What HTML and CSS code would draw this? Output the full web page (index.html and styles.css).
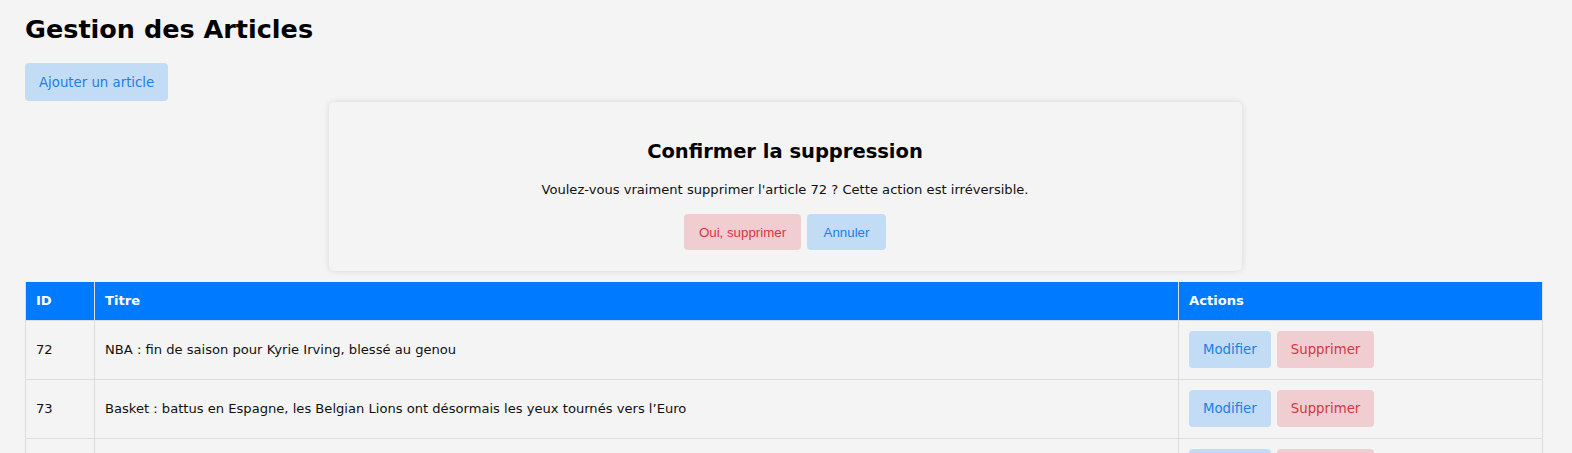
FILE: index.html
```html
<!DOCTYPE html>
<html lang="fr">
<head>
<meta charset="utf-8">
<title>Gestion des Articles</title>
<link rel="stylesheet" href="styles.css">
</head>
<body>
<div class="page">
  <h1 class="title">Gestion des Articles</h1>
  <button class="btn btn-blue add">Ajouter un article</button>
  <div class="modal">
    <h2 class="modal-title">Confirmer la suppression</h2>
    <p class="modal-text">Voulez-vous vraiment supprimer l'article 72 ? Cette action est irréversible.</p>
    <div class="modal-actions">
      <button class="mbtn mbtn-red">Oui, supprimer</button>
      <button class="mbtn mbtn-blue">Annuler</button>
    </div>
  </div>
  <table class="table">
    <thead>
      <tr><th class="c-id">ID</th><th>Titre</th><th class="c-act">Actions</th></tr>
    </thead>
    <tbody>
      <tr><td>72</td><td>NBA : fin de saison pour Kyrie Irving, blessé au genou</td><td><button class="btn btn-blue">Modifier</button><button class="btn btn-red">Supprimer</button></td></tr>
      <tr><td>73</td><td>Basket : battus en Espagne, les Belgian Lions ont désormais les yeux tournés vers l’Euro</td><td><button class="btn btn-blue">Modifier</button><button class="btn btn-red">Supprimer</button></td></tr>
      <tr><td>74</td><td>Football : les Diables Rouges préparent leur prochain match</td><td><button class="btn btn-blue">Modifier</button><button class="btn btn-red">Supprimer</button></td></tr>
    </tbody>
  </table>
</div>
</body>
</html>
```
FILE: styles.css
```css
html, body {
  margin: 0;
  padding: 0;
  background: #f4f4f4;
}
body {
  font-family: "DejaVu Sans", Verdana, sans-serif;
  font-size: 13.1px;
  color: #111;
}
.page {
  padding: 14px 29px 20px 25px;
}
.title {
  font-size: 25.5px;
  font-weight: bold;
  margin: 0 0 18px 0;
  line-height: 31px;
  color: #000;
}
.btn {
  font-family: "DejaVu Sans", Verdana, sans-serif;
  font-size: 13.3px;
  border: none;
  border-radius: 4px;
  padding: 0 14px;
  height: 38px;
  white-space: nowrap;
  cursor: pointer;
}
.btn-blue {
  background: #c2dcf5;
  color: #1a7fe6;
}
.btn-red {
  background: #f0cdd1;
  color: #d63545;
}
.add {
  display: block;
}
.modal {
  width: 913px;
  margin: 1px auto 0;
  position: relative;
  left: 1px;
  box-sizing: border-box;
  background: #f4f4f4;
  border-radius: 5px;
  box-shadow: 0 0 6px rgba(0, 0, 0, 0.12);
  padding: 38px 20px 21px;
  text-align: center;
}
.modal-title {
  font-size: 19.5px;
  font-weight: bold;
  margin: 0;
  line-height: 24px;
  color: #000;
}
.modal-text {
  margin: 18px 0 16px;
  line-height: 16px;
}
.modal-actions {
  display: flex;
  justify-content: center;
  gap: 6px;
}
.mbtn {
  font-family: "Liberation Sans", Arial, sans-serif;
  font-size: 13.3px;
  border: none;
  border-radius: 4px;
  height: 36px;
  padding: 0 14px;
}
.mbtn-red {
  background: #f0cdd1;
  color: #d63545;
  width: 117px;
}
.mbtn-blue {
  background: #c2dcf5;
  color: #1a7fe6;
  width: 79px;
}
.table {
  margin-top: 11px;
  width: 100%;
  border-collapse: collapse;
}
.table th {
  background: #007bff;
  color: #fff;
  font-weight: bold;
  text-align: left;
  height: 38px;
  padding: 0 10px;
  border: 1px solid #ddd;
  border-top: none;
  box-sizing: border-box;
}
.table td {
  height: 59px;
  padding: 0 10px;
  border: 1px solid #ddd;
  box-sizing: border-box;
}
.c-id { width: 69px; }
.c-act { width: 364px; }
.table td .btn {
  height: 37px;
  margin-right: 6px;
}
```
